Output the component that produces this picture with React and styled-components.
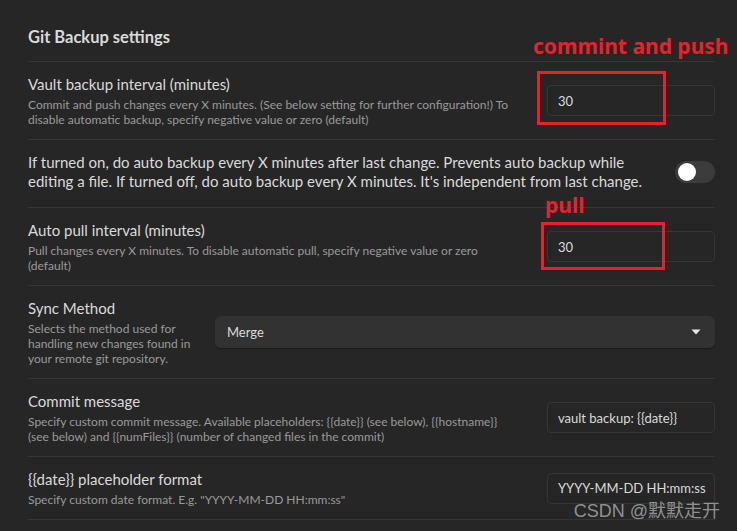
import React from 'react';
import styled, { createGlobalStyle } from 'styled-components';

const color = {
  bg: '#262626',
  line: '#363636',
  text: '#dadada',
  muted: '#9a9a9a',
  field: '#323232',
  track: '#3c3c3c',
  red: '#e8212b',
};

const GlobalStyle = createGlobalStyle`
  html, body {
    margin: 0;
    padding: 0;
    background: ${color.bg};
  }
  body {
    font-family: 'Lato', 'Noto Sans', sans-serif;
    -webkit-font-smoothing: antialiased;
  }
`;

function Caret() {
  return (
    <svg width="10" height="6" viewBox="0 0 10 6">
      <path d="M0.5 0.5 H9.5 L5 5.5 Z" fill="#e8e8e8" />
    </svg>
  );
}

export default function App() {
  return (
    <Style.Page>
      <GlobalStyle />
      <Style.Heading>Git Backup settings</Style.Heading>

      <Style.Item>
        <Style.Info>
          <Style.Name>Vault backup interval (minutes)</Style.Name>
          <Style.Description>
            Commit and push changes every X minutes. (See below setting for further configuration!) To disable
            automatic backup, specify negative value or zero (default)
          </Style.Description>
        </Style.Info>
        <Style.Control>
          <Style.Input defaultValue="30" />
          <Style.MarkBox $left={-10} $top={-14} $width={129} $height={54} />
          <Style.MarkLabel $left={-14} $top={-51}>
            commint and push
          </Style.MarkLabel>
        </Style.Control>
      </Style.Item>

      <Style.Item $gap={16} $padBottom={16.5}>
        <Style.Info>
          <Style.Name>
            If turned on, do auto backup every X minutes after last change. Prevents auto backup while editing a
            file. If turned off, do auto backup every X minutes. It's independent from last change.
          </Style.Name>
        </Style.Info>
        <Style.Toggle>
          <Style.Knob />
        </Style.Toggle>
      </Style.Item>

      <Style.Item>
        <Style.Info>
          <Style.Name>Auto pull interval (minutes)</Style.Name>
          <Style.Description>
            Pull changes every X minutes. To disable automatic pull, specify negative value or zero (default)
          </Style.Description>
        </Style.Info>
        <Style.Control>
          <Style.Input defaultValue="30" />
          <Style.MarkBox $left={-6} $top={-9} $width={124} $height={48} />
          <Style.MarkLabel $left={-2} $top={-38}>
            pull
          </Style.MarkLabel>
        </Style.Control>
      </Style.Item>

      <Style.Item $gap={22}>
        <Style.Info>
          <Style.Name>Sync Method</Style.Name>
          <Style.Description>
            Selects the method used for handling new changes found in your remote git repository.
          </Style.Description>
        </Style.Info>
        <Style.Dropdown>
          <span>Merge</span>
          <Caret />
        </Style.Dropdown>
      </Style.Item>

      <Style.Item>
        <Style.Info>
          <Style.Name>Commit message</Style.Name>
          <Style.Description>
            Specify custom commit message. Available placeholders: {'{{date}}'} (see below), {'{{hostname}}'} (see
            below) and {'{{numFiles}}'} (number of changed files in the commit)
          </Style.Description>
        </Style.Info>
        <Style.Control>
          <Style.Input defaultValue="vault backup: {{date}}" />
        </Style.Control>
      </Style.Item>

      <Style.Item $last>
        <Style.Info>
          <Style.Name>{'{{date}}'} placeholder format</Style.Name>
          <Style.Description>Specify custom date format. E.g. "YYYY-MM-DD HH:mm:ss"</Style.Description>
        </Style.Info>
        <Style.Control>
          <Style.Input defaultValue="YYYY-MM-DD HH:mm:ss" />
        </Style.Control>
      </Style.Item>

      <Style.Watermark>CSDN @默默走开</Style.Watermark>
    </Style.Page>
  );
}

const Style = {
  Page: styled.div`
    position: relative;
    box-sizing: border-box;
    width: 737px;
    height: 531px;
    padding: 27px 22px 0 28px;
    overflow: hidden;
    background: ${color.bg};
    color: ${color.text};
  `,
  Heading: styled.h3`
    margin: 0;
    padding-bottom: 14px;
    font-size: 16.5px;
    line-height: 20px;
    font-weight: 700;
    color: ${color.text};
  `,
  Item: styled.div`
    display: flex;
    align-items: center;
    gap: ${(p) => p.$gap ?? 30}px;
    padding: 12.5px 0 ${(p) => p.$padBottom ?? 12.5}px;
    border-top: 1px solid ${color.line};
    border-bottom: ${(p) => (p.$last ? `1px solid ${color.line}` : 'none')};
  `,
  Info: styled.div`
    flex: 1 1 auto;
    min-width: 0;
  `,
  Name: styled.div`
    font-size: 15px;
    line-height: 19px;
    color: ${color.text};
  `,
  Description: styled.div`
    margin-top: 3px;
    font-size: 12px;
    line-height: 15px;
    color: ${color.muted};
  `,
  Control: styled.div`
    position: relative;
    flex: 0 0 auto;
  `,
  Input: styled.input`
    box-sizing: border-box;
    display: block;
    width: 168px;
    height: 31px;
    padding: 0 4px 0 10px;
    border: 1px solid ${color.line};
    border-radius: 4px;
    background: transparent;
    color: ${color.text};
    font-family: 'Lato', 'Noto Sans', sans-serif;
    font-size: 13px;
    outline: none;
  `,
  Dropdown: styled.div`
    box-sizing: border-box;
    display: flex;
    flex: 0 0 auto;
    justify-content: space-between;
    align-items: center;
    width: 500px;
    height: 32px;
    padding: 0 14px 0 12px;
    border-radius: 6px;
    background: ${color.field};
    box-shadow: 0 1px 1px rgba(0, 0, 0, 0.3);
    font-size: 13px;
    color: ${color.text};
  `,
  Toggle: styled.div`
    box-sizing: border-box;
    display: flex;
    flex: 0 0 auto;
    align-items: center;
    width: 40px;
    height: 22px;
    padding: 0 3px;
    border-radius: 11px;
    background: ${color.track};
  `,
  Knob: styled.div`
    width: 18px;
    height: 18px;
    border-radius: 50%;
    background: #ffffff;
  `,
  MarkBox: styled.div`
    position: absolute;
    box-sizing: border-box;
    left: ${(p) => p.$left}px;
    top: ${(p) => p.$top}px;
    width: ${(p) => p.$width}px;
    height: ${(p) => p.$height}px;
    border: 3px solid ${color.red};
    pointer-events: none;
  `,
  MarkLabel: styled.div`
    position: absolute;
    left: ${(p) => p.$left}px;
    top: ${(p) => p.$top}px;
    white-space: nowrap;
    font-family: 'Noto Sans', sans-serif;
    font-size: 21px;
    line-height: 25px;
    font-weight: 700;
    color: ${color.red};
  `,
  Watermark: styled.div`
    position: absolute;
    right: 17px;
    bottom: 9px;
    font-family: 'Liberation Sans', 'Noto Sans CJK SC', sans-serif;
    font-size: 18px;
    line-height: 22px;
    color: rgba(215, 215, 215, 0.62);
  `,
};
